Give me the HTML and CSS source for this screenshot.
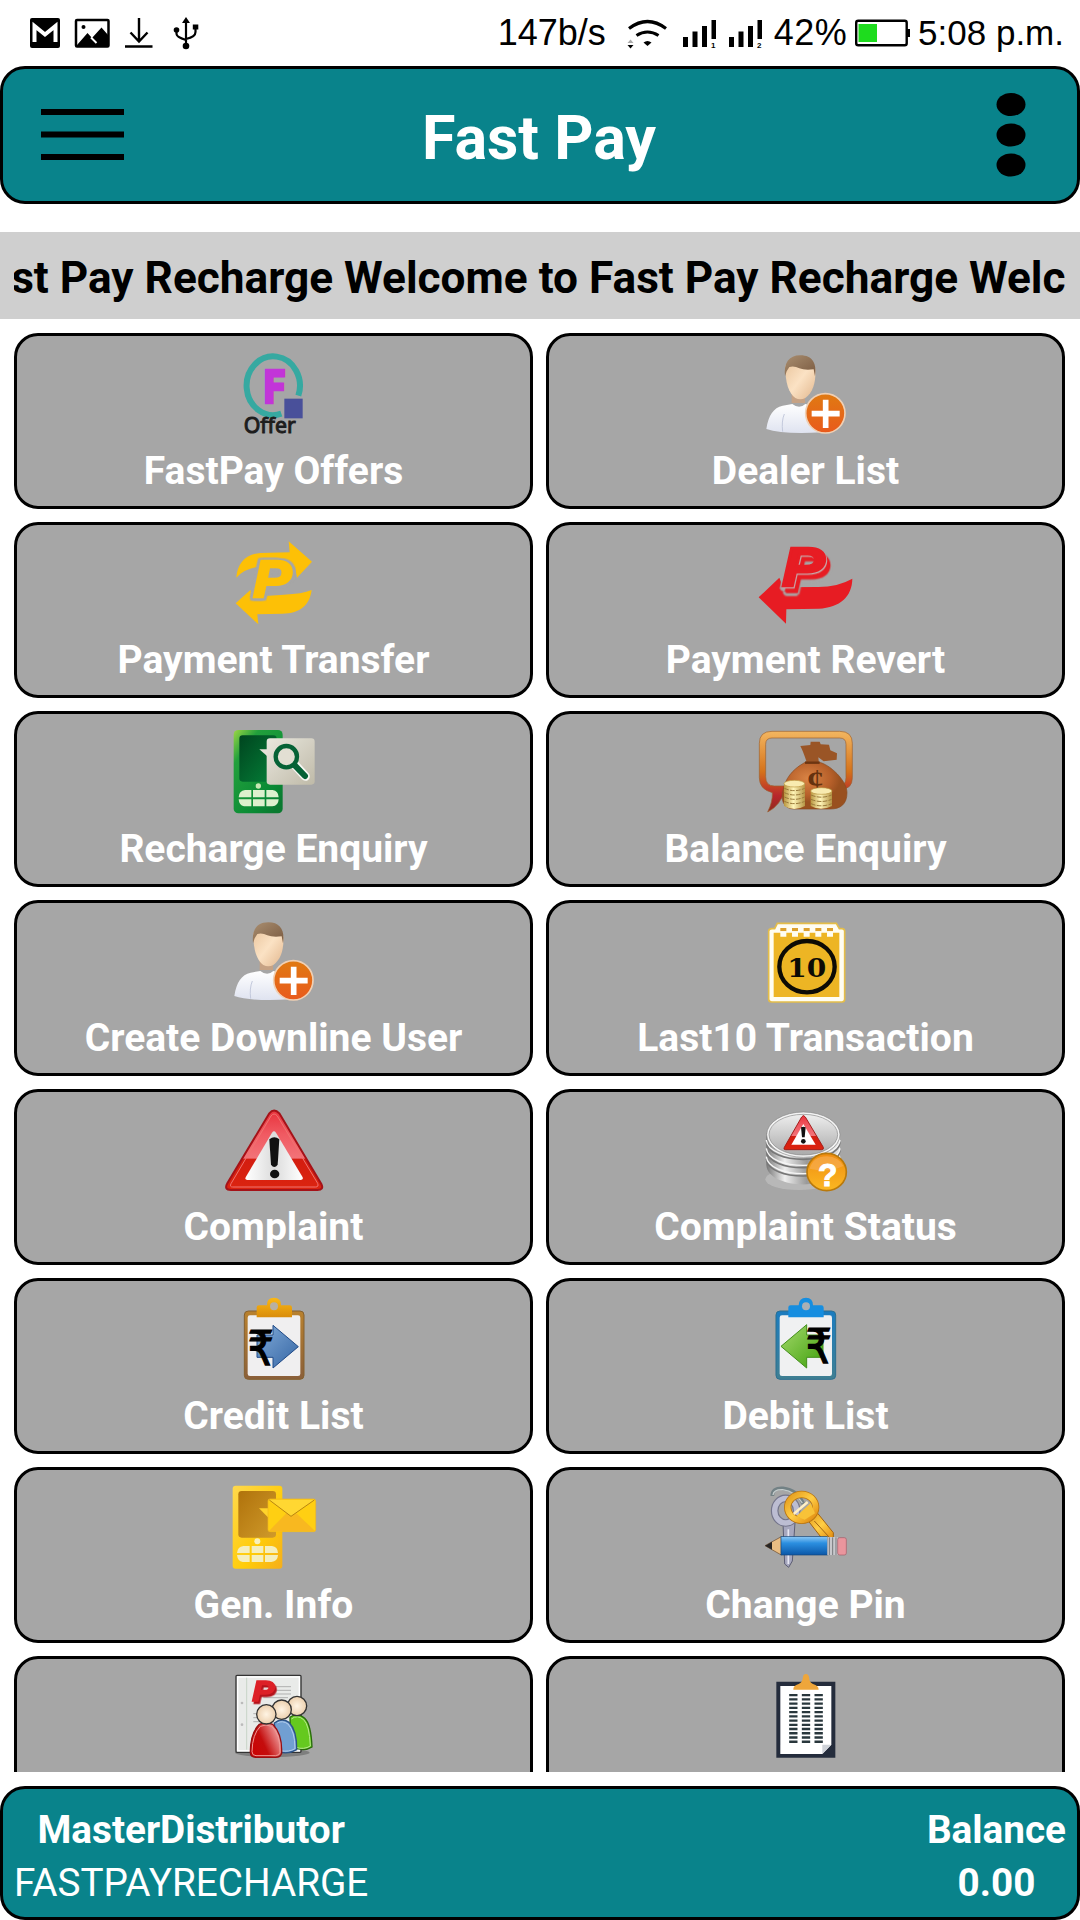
FILE: index.html
```html
<!DOCTYPE html>
<html>
<head>
    <meta charset="UTF-8">
    <title>Fast Pay</title>
    <link rel="stylesheet" href="styles.css">
</head>
<body>
    <!-- shared gradients and the user icon -->
    <svg class="defs" width="0" height="0">
        <defs>
            <linearGradient id="face" x1="0" y1="0" x2="1" y2="1"><stop offset="0" stop-color="#e9c49c"/><stop offset=".5" stop-color="#fbe2c4"/><stop offset="1" stop-color="#e2b78e"/></linearGradient>
            <linearGradient id="hair" x1="0" y1="0" x2="1" y2="1"><stop offset="0" stop-color="#a98e70"/><stop offset="1" stop-color="#79593f"/></linearGradient>
            <linearGradient id="shirt" x1="0" y1="0" x2="0" y2="1"><stop offset="0" stop-color="#fff"/><stop offset="1" stop-color="#dfe3f0"/></linearGradient>
            <linearGradient id="orange" x1="0" y1="0" x2="0" y2="1"><stop offset="0" stop-color="#e07a12"/><stop offset="1" stop-color="#e95a1c"/></linearGradient>
            <linearGradient id="green" x1="0" y1="0" x2=".8" y2="1"><stop offset="0" stop-color="#9bd645"/><stop offset=".25" stop-color="#22a03c"/><stop offset=".8" stop-color="#0a8a35"/><stop offset="1" stop-color="#0a7a30"/></linearGradient>
            <linearGradient id="darkgreen" x1="0" y1="0" x2="1" y2="1"><stop offset="0" stop-color="#00451f"/><stop offset="1" stop-color="#048038"/></linearGradient>
            <linearGradient id="paper" x1="0" y1="0" x2="1" y2="1"><stop offset="0" stop-color="#e9e7de"/><stop offset="1" stop-color="#bfbaa8"/></linearGradient>
            <linearGradient id="bubble" x1="0" y1="0" x2="0" y2="1"><stop offset="0" stop-color="#f3b660"/><stop offset=".5" stop-color="#d5721a"/><stop offset=".8" stop-color="#b8262c"/><stop offset="1" stop-color="#8e2a1c"/></linearGradient>
            <radialGradient id="bag" cx=".4" cy=".35"><stop offset="0" stop-color="#d98445"/><stop offset=".7" stop-color="#b7602a"/><stop offset="1" stop-color="#99501f"/></radialGradient>
            <linearGradient id="coin"><stop offset="0" stop-color="#b9963f"/><stop offset=".45" stop-color="#fff5b8"/><stop offset="1" stop-color="#b59444"/></linearGradient>
            <linearGradient id="red" x1="0" y1="0" x2="0" y2="1"><stop offset="0" stop-color="#e8323c"/><stop offset=".3" stop-color="#f05a62"/><stop offset=".6" stop-color="#f27378"/><stop offset=".61" stop-color="#d31d10"/><stop offset="1" stop-color="#dc2410"/></linearGradient>
            <linearGradient id="sign"><stop offset="0" stop-color="#fff"/><stop offset=".5" stop-color="#dcdcdc"/><stop offset="1" stop-color="#fff"/></linearGradient>
            <linearGradient id="silver"><stop offset="0" stop-color="#777"/><stop offset=".25" stop-color="#eee"/><stop offset=".55" stop-color="#999"/><stop offset="1" stop-color="#e5e5e5"/></linearGradient>
            <linearGradient id="steel" x1="0" y1="0" x2="0" y2="1"><stop offset="0" stop-color="#eee"/><stop offset="1" stop-color="#aaa"/></linearGradient>
            <linearGradient id="gold" x1="0" y1="0" x2="0" y2="1"><stop offset="0" stop-color="#f08c10"/><stop offset="1" stop-color="#fbb822"/></linearGradient>
            <linearGradient id="wood" x1="0" y1="0" x2="0" y2="1"><stop offset="0" stop-color="#b9812e"/><stop offset="1" stop-color="#8a5f3a"/></linearGradient>
            <linearGradient id="clipgold" x1="0" y1="0" x2="0" y2="1"><stop offset="0" stop-color="#fbb814"/><stop offset="1" stop-color="#d98c0a"/></linearGradient>
            <linearGradient id="blueboard" x1="0" y1="0" x2="0" y2="1"><stop offset="0" stop-color="#1b7cc0"/><stop offset="1" stop-color="#3f7f92"/></linearGradient>
            <linearGradient id="bluearrow" x1="0" y1="0" x2="1" y2="1"><stop offset="0" stop-color="#82abd8"/><stop offset="1" stop-color="#3465a4"/></linearGradient>
            <linearGradient id="greenarrow" x1="0" y1="0" x2="1" y2="1"><stop offset="0" stop-color="#a5d96c"/><stop offset="1" stop-color="#3fa00c"/></linearGradient>
            <linearGradient id="yellow" x1="0" y1="0" x2="1" y2="1"><stop offset="0" stop-color="#ffd84e"/><stop offset=".6" stop-color="#ffcc08"/><stop offset="1" stop-color="#f5ae1c"/></linearGradient>
            <linearGradient id="brown" x1="0" y1="0" x2="1" y2="1"><stop offset="0" stop-color="#b0720b"/><stop offset="1" stop-color="#cf9a2b"/></linearGradient>
            <linearGradient id="pencil" x1="0" y1="0" x2="0" y2="1"><stop offset="0" stop-color="#8cc8f5"/><stop offset=".35" stop-color="#2b8fe0"/><stop offset="1" stop-color="#0b57a8"/></linearGradient>
            <linearGradient id="keygold" x1="0" y1="0" x2="1" y2="1"><stop offset="0" stop-color="#e39a1c"/><stop offset=".5" stop-color="#ffce45"/><stop offset="1" stop-color="#e0880e"/></linearGradient>
            <radialGradient id="head"><stop offset="0" stop-color="#fff4e4"/><stop offset="1" stop-color="#ecd0ae"/></radialGradient>
            <linearGradient id="redbody" x1="0" y1="1" x2="1" y2=".5"><stop offset="0" stop-color="#c00"/><stop offset=".5" stop-color="#c40d0d"/><stop offset="1" stop-color="#ee9a9a"/></linearGradient>
            <symbol id="user-add" viewBox="55 621 330 252">
                <path d="M177 750h40v30h-40z" fill="#c6a284"/>
                <path d="M101 858C108 815 122 795 150 788L179 783Q200 800 218 783L245 790 270 868Q150 875 101 858Z" fill="url(#shirt)"/>
                <path d="M150 866Q146 835 155 813" fill="none" stroke="#c3c9dc" stroke-width="3"/>
                <path d="M158 672Q160 650 203 650 246 650 248 680C250 720 240 748 218 765Q203 773 188 765C168 750 158 720 158 672Z" fill="url(#face)"/>
                <path d="M157 700C153 660 168 637 203 637 240 637 253 662 247 700L243 679Q215 682 200 676 185 668 170 672L162 685Z" fill="url(#hair)"/>
                <circle cx="278" cy="811" r="59" fill="url(#orange)" stroke="#f0d0b4" stroke-width="5"/>
                <path d="M279 770v85M237 812h84" stroke="#fff" stroke-width="17"/>
            </symbol>
        </defs>
    </svg>

    <div class="status-bar">
        <div class="status-left">
            <svg width="31" height="32" viewBox="29 17 31 32">
                <rect x="30" y="18" width="30" height="30" rx="2"/>
                <path d="M34.500 42V26L45 34.500 55.500 26V42" fill="none" stroke="#fff" stroke-width="4"/>
            </svg>
            <svg width="36" height="32" viewBox="74 17 36 32">
                <rect x="76" y="20" width="32.500" height="26.500" rx="1" fill="none" stroke="#000" stroke-width="2.500"/>
                <circle cx="83.500" cy="27" r="2"/>
                <path d="M77 45 87.500 33 92 38 101.500 27.500 108 35V46H77Z"/>
                <path d="M91 37.500 96.500 43" stroke="#fff" stroke-width="2"/>
            </svg>
            <svg width="29" height="32" viewBox="124 17 29 32">
                <path d="M139 18V41M130.500 32.500 139 41.500 147.500 32.500M125 46.500H152.500" fill="none" stroke="#000" stroke-width="2.400"/>
            </svg>
            <svg width="27" height="34" viewBox="173 16 27 34">
                <path d="M186 20V45M176.500 30V34Q176.500 37 186 40M195.500 28V32Q195.500 37 186 39" fill="none" stroke="#000" stroke-width="2.200"/>
                <path d="M186 17 190 23H182Z"/><circle cx="176.500" cy="30" r="2.800"/><rect x="192.800" y="24.500" width="5.500" height="5"/><circle cx="186" cy="46" r="3.300"/>
            </svg>
        </div>
        <div class="status-right">
            <span class="speed">147b/s</span>
            <svg class="wifi" width="41" height="32" viewBox="629 17 41 32">
                <path d="M632 28.500Q650.500 14.500 669 28.500M639.500 35.500Q650.500 28.500 661.500 35.500" fill="none" stroke="#000" stroke-width="3.200"/>
                <path d="M646.500 42.500Q650.500 39.500 654.500 42.500L650.500 46Z"/>
                <path d="M630.500 43 633.500 39.500 636.500 43Z" fill="#aaa"/><path d="M630.500 45H636.500L633.500 48.500Z"/>
            </svg>
            <svg class="signal" width="35" height="29" viewBox="684 18 35 29">
                <path d="M685 36h5v10h-5zM694.500 30.500h5v15.500h-5zM704 25h5v21h-5zM713.500 19h4.500v19h-4.500z"/>
                <text x="713" y="46.500" font-size="8" font-weight="bold">1</text>
            </svg>
            <svg class="signal" width="35" height="29" viewBox="684 18 35 29">
                <path d="M685 36h5v10h-5zM694.500 30.500h5v15.500h-5zM704 25h5v21h-5zM713.500 19h4.500v19h-4.500z"/>
                <text x="713" y="46.500" font-size="8" font-weight="bold">2</text>
            </svg>
            <span class="percent">42%</span>
            <svg class="battery" width="55" height="28" viewBox="857 19 55 28">
                <rect x="858.200" y="20.700" width="50.500" height="24.600" rx="2" fill="#fff" stroke="#000" stroke-width="2.400"/>
                <path d="M860.500 24H879V42H860.500Z" fill="#1edc1e"/><rect x="909" y="29" width="3" height="8"/>
            </svg>
            <span class="time">5:08 p.m.</span>
        </div>
    </div>

    <div class="header">
        <svg class="menu" width="83" height="54" viewBox="0 0 83 54">
            <path d="M0 4h83M0 26.500h83M0 49h83" stroke="#000" stroke-width="6"/>
        </svg>
        <span class="title">Fast Pay</span>
        <svg class="more" width="30" height="84" viewBox="0 0 30 84">
            <ellipse cx="15" cy="11.500" rx="14.500" ry="11.500"/><ellipse cx="15" cy="42" rx="14.500" ry="11.500"/><ellipse cx="15" cy="72" rx="14.500" ry="11.500"/>
        </svg>
    </div>

    <div class="marquee">
        <div class="marquee-window"><span class="marquee-text">Fast Pay Recharge Welcome to Fast Pay Recharge Welcome</span></div>
    </div>

    <div class="grid">
        <div class="card">
            <svg class="icon" viewBox="55 60 330 252">
                <path d="M242 251A80 88 0 1 1 293 197" fill="none" stroke="#36a9a1" stroke-width="18"/>
                <text x="190" y="220" class="f" textLength="62" lengthAdjust="spacingAndGlyphs">F</text>
                <rect x="251" y="206" width="55" height="59" fill="#49509a"/>
                <text x="129" y="310" class="offer" textLength="156" lengthAdjust="spacingAndGlyphs">Offer</text>
            </svg>
            <span class="label">FastPay Offers</span>
        </div>
        <div class="card">
            <svg class="icon"><use href="#user-add"/></svg>
            <span class="label">Dealer List</span>
        </div>
        <div class="card">
            <svg class="icon" viewBox="55 627 330 252">
                <path d="M107 743C110 700 135 672 180 669L267 667 264 634 334 695 289 743 283 710 165 712Q130 718 107 743Z" fill="#fdc006"/>
                <path d="M333 780C327 825 300 850 245 851L170 853 173 883 105 820 149 780 160 800 250 794Q305 792 333 780Z" fill="#fdc006"/>
                <text x="158" y="801" class="p-mark p-yellow" textLength="114" lengthAdjust="spacingAndGlyphs">P</text>
            </svg>
            <span class="label">Payment Transfer</span>
        </div>
        <div class="card">
            <svg class="icon" viewBox="62 627 330 252">
                <path d="M85 802 147 743 158 772 260 771Q320 772 366 746C365 800 330 832 265 836L168 838 167 881Z" fill="#e71c23"/>
                <text x="155" y="767" class="p-mark p-red" textLength="128" lengthAdjust="spacingAndGlyphs">P</text>
            </svg>
            <span class="label">Payment Revert</span>
        </div>
        <div class="card">
            <svg class="icon" viewBox="55 56 330 252">
                <rect x="99" y="62" width="147" height="250" rx="14" fill="url(#green)"/>
                <rect x="116" y="78" width="112" height="139" rx="10" fill="url(#darkgreen)"/>
                <path d="M176 120H205V145Z" fill="#e4e2d8"/>
                <rect x="198" y="87" width="144" height="139" rx="10" fill="url(#paper)"/>
                <path d="M282 166 314 201" stroke="#f8f8f4" stroke-width="27" stroke-linecap="round"/>
                <circle cx="257" cy="142" r="32" fill="#e2dfd3" stroke="#056236" stroke-width="13"/>
                <path d="M283 169 313 200" stroke="#056236" stroke-width="18" stroke-linecap="round"/>
                <circle cx="173" cy="230" r="8" fill="#c8e8b4"/>
                <path d="M133 242H152V264H114Q115 244 133 242ZM157 242H192V264H157ZM197 242H216Q233 244 234 264H197ZM114 270H152V291H130Q115 288 114 270ZM157 270H192V291H157ZM197 270H234Q233 290 215 291H197Z" fill="#ddf0cd"/>
            </svg>
            <span class="label">Recharge Enquiry</span>
        </div>
        <div class="card">
            <svg class="icon" viewBox="62 56 330 252">
                <path d="M125 66H328Q366 66 366 102V205Q366 240 330 240H165Q150 290 112 308 128 275 126 250 87 240 87 205V102Q87 66 125 66ZM125 86Q106 86 106 105V202Q106 230 132 230H325Q347 230 347 205V105Q347 86 328 86Z" fill="url(#bubble)" fill-rule="evenodd" stroke="#9c6030" stroke-width="2"/>
                <path d="M226 158H264C300 165 350 215 350 250 350 285 330 299 300 299H190C160 299 148 270 160 235 170 195 200 172 226 158Z" fill="url(#bag)" stroke="#8a4a20" stroke-width="2"/>
                <path d="M228 155Q218 125 210 110L240 107 241 97H268L271 105 296 106 300 123 320 132 319 151 280 156 264 144 266 164H226Z" fill="#9a5526"/>
                <path d="M224 160H268" stroke="#6d3511" stroke-width="7"/>
                <text x="230" y="236" class="cent" textLength="50" lengthAdjust="spacingAndGlyphs">¢</text>
                <path d="M161 223V290Q192 308 224 290V223Z" fill="url(#coin)"/>
                <path d="M162 237Q192 251 223 237M162 250Q192 264 223 250M162 263Q192 277 223 263M162 276Q192 290 223 276" fill="none" stroke="#99793a" stroke-width="3" stroke-dasharray="14 4"/>
                <ellipse cx="192" cy="223" rx="31" ry="10" fill="#f8ebb0" stroke="#b9963f" stroke-width="2"/>
                <path d="M241 245V290Q272 307 305 290V245Z" fill="url(#coin)"/>
                <path d="M242 257Q272 270 304 257M242 270Q272 283 304 270M242 283Q272 296 304 283" fill="none" stroke="#99793a" stroke-width="3" stroke-dasharray="14 4"/>
                <ellipse cx="273" cy="245" rx="32" ry="10" fill="#f8ebb0" stroke="#b9963f" stroke-width="2"/>
            </svg>
            <span class="label">Balance Enquiry</span>
        </div>
        <div class="card">
            <svg class="icon"><use href="#user-add"/></svg>
            <span class="label">Create Downline User</span>
        </div>
        <div class="card">
            <svg class="icon" viewBox="62 621 330 252">
                <path d="M125 656H133L141 640H318L327 656H335Q343 656 343 664V868Q343 876 335 876H124Q115 876 115 868V664Q115 656 125 656Z" fill="#fffdf2" stroke="#e4bd49" stroke-width="5"/>
                <path d="M130 668H327V861H130Z" fill="#edb524"/>
                <path d="M150 659H309" stroke="#dda02c" stroke-width="10" stroke-dasharray="18 17"/>
                <path d="M150 672H309" stroke="#fffdf2" stroke-width="16" stroke-dasharray="18 17"/>
                <ellipse cx="230" cy="770" rx="83" ry="77" fill="none" stroke="#0d0b05" stroke-width="13"/>
                <text x="171" y="800" class="ten" textLength="117" lengthAdjust="spacingAndGlyphs">10</text>
            </svg>
            <span class="label">Last10 Transaction</span>
        </div>
        <div class="card">
            <svg class="icon" viewBox="55 48 330 252">
                <path d="M206 70Q220 53 236 70L362 282Q371 300 350 300H91Q69 300 80 280Z" fill="url(#red)" stroke="#a51218" stroke-width="6"/>
                <path d="M211 78Q220 66 230 78L351 280Q355 291 345 291H96Q86 291 91 281Z" fill="none" stroke="#ef7471" stroke-width="3"/>
                <path d="M214 128Q220 120 226 128L306 262Q308 270 300 270H140Q132 270 135 262Z" fill="url(#sign)"/>
                <path d="M206 148Q221 136 236 148L231 224Q221 238 211 224Z" fill="#111"/><ellipse cx="222" cy="252" rx="14" ry="13" fill="#111"/>
            </svg>
            <span class="label">Complaint</span>
        </div>
        <div class="card">
            <svg class="icon" viewBox="62 48 330 252">
                <ellipse cx="205" cy="268" rx="100" ry="32" fill="#c5c5c5" opacity=".6"/>
                <path d="M108 130V225C112 300 320 305 329 225V130Z" fill="url(#silver)"/>
                <path d="M108 157C115 225 322 225 329 157M108 182C115 250 322 250 329 182M108 207C115 275 322 275 329 207" fill="none" stroke="#777" stroke-width="5"/>
                <path d="M108 150C115 218 322 218 329 150M108 175C115 243 322 243 329 175M108 200C115 268 322 268 329 200" fill="none" stroke="#f5f5f5" stroke-width="4"/>
                <ellipse cx="219" cy="134" rx="110" ry="68" fill="#f4f4f4" stroke="#888" stroke-width="2"/>
                <ellipse cx="219" cy="134" rx="103" ry="61" fill="url(#steel)" stroke="#888" stroke-width="2"/>
                <path d="M214 81Q219 72 225 81L279 172Q281 179 274 179H166Q158 179 162 172Z" fill="url(#red)" stroke="#a3201c" stroke-width="3"/>
                <path d="M219 102 256 164H183Z" fill="#fff"/>
                <path d="M212 112Q219 108 226 112L223 142H215Z" fill="#111"/><circle cx="219" cy="154" r="7" fill="#111"/>
                <ellipse cx="289" cy="246" rx="59" ry="56" fill="url(#gold)" stroke="#b9790c" stroke-width="5"/>
                <path d="M238 236Q248 199 290 199 325 201 339 228 290 250 238 236Z" fill="#f6ad50" opacity=".7"/>
                <text x="263" y="287" class="question" textLength="58" lengthAdjust="spacingAndGlyphs">?</text>
            </svg>
            <span class="label">Complaint Status</span>
        </div>
        <div class="card">
            <svg class="icon" viewBox="55 617 330 252">
                <rect x="131" y="665" width="179" height="205" rx="12" fill="url(#wood)" stroke="#85602e" stroke-width="3"/>
                <rect x="141" y="678" width="158" height="182" rx="7" fill="#f0eff0"/>
                <path d="M168 684V654Q168 648 175 648H199Q198 625 220 625 242 625 241 648H267Q274 648 274 655V684Z" fill="url(#clipgold)"/>
                <circle cx="220" cy="651" r="12" fill="#b8b0a0"/>
                <path d="M169 737H217V708L293 772 217 836V804H169Z" fill="url(#bluearrow)" stroke="#204a87" stroke-width="3"/>
                <text x="141" y="826" class="rupee" textLength="78" lengthAdjust="spacingAndGlyphs">₹</text>
            </svg>
            <span class="label">Credit List</span>
        </div>
        <div class="card">
            <svg class="icon" viewBox="62 617 330 252">
                <rect x="137" y="665" width="179" height="205" rx="12" fill="url(#blueboard)" stroke="#2b6f91" stroke-width="3"/>
                <rect x="148" y="678" width="157" height="182" rx="7" fill="#f0f1f2"/>
                <path d="M174 684V654Q174 648 181 648H205Q206 625 227 625 248 625 248 648H273Q280 648 280 655V684Z" fill="#168ee0"/>
                <circle cx="227" cy="651" r="12" fill="#a9b0b5"/>
                <path d="M278 737H229V706L152 771 229 836V804H278Z" fill="url(#greenarrow)" stroke="#438f1b" stroke-width="3"/>
                <text x="226" y="820" class="rupee" textLength="78" lengthAdjust="spacingAndGlyphs">₹</text>
            </svg>
            <span class="label">Debit List</span>
        </div>
        <div class="card">
            <svg class="icon" viewBox="55 45 330 252">
                <rect x="96" y="50" width="149" height="249" rx="9" fill="url(#yellow)"/>
                <rect x="113" y="66" width="113" height="140" rx="10" fill="url(#brown)"/>
                <path d="M175 118H210V153Z" fill="#ffd32b"/>
                <rect x="202" y="90" width="143" height="98" rx="6" fill="#ffcf12" stroke="#f2b51e" stroke-width="2"/>
                <path d="M205 186 258 132H286L343 186Z" fill="#f8b820"/>
                <path d="M206 93 271 142 341 93" fill="#ffd732" stroke="#b98611" stroke-width="3"/>
                <circle cx="170" cy="217" r="9" fill="#f8f0bb"/>
                <path d="M128 231H147V252H109Q111 233 128 231ZM153 231H188V252H153ZM193 231H214Q231 233 232 252H193ZM109 258H147V279H126Q111 277 109 258ZM153 258H188V279H153ZM193 258H232Q231 277 212 279H193Z" fill="#f4eebd"/>
            </svg>
            <span class="label">Gen. Info</span>
        </div>
        <div class="card">
            <svg class="icon" viewBox="62 44 330 252">
                <path d="M158 160H194L186 275 175 294 163 284Z" fill="#a6a7be" stroke="#5c5d73" stroke-width="3"/>
                <path d="M174 180V284" stroke="#e8e8f4" stroke-width="5"/>
                <ellipse cx="166" cy="124" rx="33" ry="37" fill="none" stroke="#74758b" stroke-width="23"/>
                <ellipse cx="166" cy="124" rx="33" ry="37" fill="none" stroke="#bcbdd2" stroke-width="16"/>
                <path d="M126 80Q125 55 158 57 202 62 219 104" fill="none" stroke="#728185" stroke-width="11"/>
                <path d="M128 77Q130 60 157 61 196 67 216 101" fill="none" stroke="#c4cccc" stroke-width="4"/>
                <path d="M231 151 262 132 309 190V210H277Z" fill="url(#keygold)" stroke="#a16312" stroke-width="3"/>
                <path d="M252 155 297 204" stroke="#9f6415" stroke-width="3"/>
                <ellipse cx="214" cy="114" rx="42" ry="39" fill="none" stroke="#b87513" stroke-width="22"/>
                <ellipse cx="214" cy="114" rx="42" ry="39" fill="none" stroke="url(#keygold)" stroke-width="17"/>
                <path d="M198 141 241 101 254 132 223 151Z" fill="#f8c238"/><path d="M190 134 232 98" stroke="#fff0c5" stroke-width="7"/>
                <path d="M104 229 153 202V257Z" fill="#e9bd83" stroke="#684525" stroke-width="2"/><path d="M104 229 125 217V241Z" fill="#272525"/>
                <rect x="152" y="202" width="139" height="55" fill="url(#pencil)" stroke="#154578" stroke-width="2"/>
                <rect x="291" y="203" width="31" height="54" fill="#c8c8cc"/><path d="M297 204v53M307 204v53M317 204v53" stroke="#75777c" stroke-width="3"/>
                <rect x="322" y="205" width="26" height="52" rx="6" fill="#e9959d" stroke="#a15a66" stroke-width="2"/>
            </svg>
            <span class="label">Change Pin</span>
        </div>
        <div class="card">
            <svg class="icon" viewBox="55 612 330 252">
                <ellipse cx="215" cy="851" rx="112" ry="13" fill="#555" opacity=".5"/>
                <rect x="106" y="619" width="195" height="231" rx="3" fill="#e9ebe9" stroke="#333" stroke-width="4"/>
                <rect x="111" y="624" width="185" height="221" fill="none" stroke="#fff" stroke-width="4"/>
                <path d="M138 626v216" stroke="#b8c9b8" stroke-width="2"/><circle cx="124" cy="702" r="4" fill="#bbb"/><circle cx="124" cy="767" r="4" fill="#bbb"/>
                <path d="M215 653h56M218 664h53M212 675h59M188 686h74M158 734h30M158 746h30M158 758h30" stroke="#a5a5a5" stroke-width="2.500"/>
                <text x="155" y="697" class="p-small" textLength="66" lengthAdjust="spacingAndGlyphs">P</text>
                <path d="M268 745Q290 728 312 748 331 765 334 834 310 850 270 833Z" fill="#65c91f" stroke="#286b0b" stroke-width="4"/>
                <path d="M272 750Q290 736 309 752 326 768 329 831 310 843 285 835" fill="none" stroke="#b9ea8f" stroke-width="3"/>
                <circle cx="289" cy="711" r="29" fill="url(#head)" stroke="#333" stroke-width="4"/>
                <path d="M221 762Q243 745 265 760 289 785 288 842 262 858 230 847Z" fill="#719fd2" stroke="#2c5387" stroke-width="4"/>
                <path d="M230 762Q245 753 262 765 283 788 283 839 265 850 240 845" fill="none" stroke="#b4cdec" stroke-width="3"/>
                <circle cx="243" cy="722" r="29" fill="url(#head)" stroke="#333" stroke-width="4"/>
                <path d="M176 766Q196 758 216 766 245 795 243 852 240 865 225 865H165Q149 865 149 850 149 792 176 766Z" fill="url(#redbody)" stroke="#960f12" stroke-width="4"/>
                <path d="M179 772Q196 764 213 772 240 797 238 850 236 860 224 860H166Q154 860 154 848 155 796 179 772Z" fill="none" stroke="#ee9a97" stroke-width="3"/>
                <circle cx="197" cy="736" r="29" fill="url(#head)" stroke="#333" stroke-width="4"/>
            </svg>
        </div>
        <div class="card">
            <svg class="icon" viewBox="62 612 330 252">
                <path d="M138 638H315V866H138Z" fill="#242c3c"/>
                <path d="M150 651H303V827L276 855H150Z" fill="#fff"/><path d="M276 855V827H303Z" fill="#ced2d8"/>
                <path d="M189 662Q188 650 205 645 216 641 218 624 219 615 227 615 234 615 236 624 237 641 248 645 265 650 265 662Z" fill="#eea63b"/>
                <path d="M189 675V824M227 675V824M265 675V824" stroke="#29373c" stroke-width="25" stroke-dasharray="7 5.700"/>
            </svg>
        </div>
    </div>

    <div class="footer">
        <div class="account">
            <span class="role">MasterDistributor</span>
            <span class="name">FASTPAYRECHARGE</span>
        </div>
        <div class="balance">
            <span>Balance</span>
            <span>0.00</span>
        </div>
    </div>
</body>
</html>
```
FILE: styles.css
```css
* {
    margin: 0;
    padding: 0;
    box-sizing: border-box;
}

body {
    width: 1080px;
    height: 1920px;
    display: flex;
    flex-direction: column;
    overflow: hidden;
    background: #fff;
    font-family: Roboto, sans-serif;
}

svg {
    display: block;
    flex: none;
}

.defs {
    position: absolute;
}

.status-bar {
    height: 66px;
    padding: 0 16px 0 29px;
    display: flex;
    align-items: center;
    justify-content: space-between;
    font-family: "Liberation Sans", sans-serif;
    font-size: 36px;
    white-space: nowrap;
}

.status-left {
    display: flex;
    align-items: center;
    gap: 14px;
}

.status-left svg:last-child {
    margin-left: 6px;
}

.status-right {
    display: flex;
    align-items: center;
}

.wifi {
    margin: 0 15px 0 20px;
}

.signal {
    margin-right: 11px;
}

.percent {
    letter-spacing: 0.4px;
}

.battery {
    margin: 0 8px 0 8px;
}

.time {
    font-size: 35px;
}

.header {
    height: 138px;
    padding: 0 51px 0 38px;
    display: grid;
    grid-template-columns: 1fr auto 1fr;
    align-items: center;
    background: #09838b;
    border: 3px solid #000;
    border-radius: 25px;
}

.title {
    margin-left: 11px;
    padding-top: 6px;
    font-size: 61px;
    font-weight: bold;
    line-height: 72px;
    color: #fff;
}

.more {
    justify-self: end;
}

.marquee {
    height: 87px;
    margin-top: 28px;
    padding: 0 14px;
    background: #cfcfcf;
}

.marquee-window {
    height: 87px;
    overflow: hidden;
    white-space: nowrap;
}

.marquee-text {
    display: block;
    margin-left: -50px;
    font-size: 44.2px;
    font-weight: bold;
    line-height: 92px;
}

.grid {
    height: 1453px;
    padding: 14px 14px 0;
    display: grid;
    grid-template-columns: 519px 519px;
    grid-auto-rows: 176px;
    gap: 13px;
    overflow: hidden;
}

.card {
    padding-top: 14px;
    display: flex;
    flex-direction: column;
    align-items: center;
    background: #a6a6a6;
    border: 3px solid #000;
    border-radius: 24px;
}

.icon {
    width: 110px;
    height: 84px;
    overflow: visible;
}

.label {
    margin-top: 14px;
    font-size: 39px;
    font-weight: bold;
    line-height: 46px;
    color: #fff;
    white-space: nowrap;
}

.footer {
    height: 134px;
    margin-top: 14px;
    padding: 14px 11px 0 11px;
    display: flex;
    justify-content: space-between;
    background: #09838b;
    border: 3px solid #000;
    border-radius: 25px;
    font-size: 38.7px;
    font-weight: bold;
    line-height: 53px;
    color: #fff;
}

.account,
.balance {
    display: flex;
    flex-direction: column;
    align-items: center;
}

.name {
    font-weight: normal;
}

/* lettering inside the icons */
.f {
    font: 900 136px Roboto, sans-serif;
    fill: #c235d8;
    stroke: #c235d8;
    stroke-width: 8;
}

.offer {
    font: 66px "Noto Sans", sans-serif;
    fill: #1d1d1d;
    stroke: #1d1d1d;
    stroke-width: 3;
}

.p-mark {
    font: italic 900 154px "Liberation Sans", sans-serif;
}

/* letter with a gap of card colour around it */
.p-yellow {
    fill: #fdc006;
    stroke: #fdc006;
    stroke-width: 8;
    filter: drop-shadow(7px 0 0 #a6a6a6) drop-shadow(-7px 0 0 #a6a6a6) drop-shadow(0 7px 0 #a6a6a6) drop-shadow(0 -5px 0 #a6a6a6);
}

.p-red {
    font-size: 168px;
    fill: #e71c23;
    stroke: #e71c23;
    stroke-width: 8;
    filter: drop-shadow(3px 4px 0 #c9a0a2) drop-shadow(10px 14px 0 #e71c23) drop-shadow(-5px 5px 0 #a6a6a6) drop-shadow(4px 3px 0 #a6a6a6);
}

.p-small {
    font: italic 900 86px "Liberation Sans", sans-serif;
    fill: #dd2027;
    stroke: #dd2027;
    stroke-width: 5;
    filter: drop-shadow(5px 7px 0 #b5121b);
}

.cent {
    font: bold 84px "Liberation Serif", serif;
    fill: #65320f;
}

.ten {
    font: bold 78px "DejaVu Serif", serif;
    fill: #0d0b05;
}

.question {
    font: bold 95px "Liberation Sans", sans-serif;
    fill: #fff;
    stroke: #fff;
    stroke-width: 3;
}

.rupee {
    font: 143px "DejaVu Sans", sans-serif;
    fill: #000;
    stroke: #000;
    stroke-width: 4;
}
```
